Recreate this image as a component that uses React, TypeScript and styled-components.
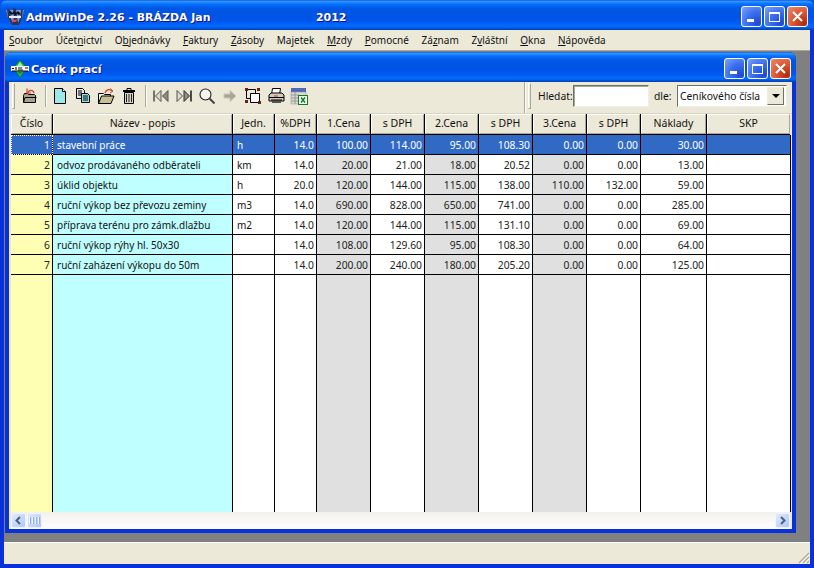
import React from 'react';
import styled, { createGlobalStyle } from 'styled-components';

const Global = createGlobalStyle`
  html, body { margin: 0; padding: 0; width: 814px; height: 568px; overflow: hidden; background: #0054e3; }
  * { box-sizing: border-box; }
  #root { width: 814px; height: 568px; }
`;

const titleGradient = `linear-gradient(180deg,#0058e6 0%,#3a93ff 4%,#288eff 7%,#127dff 10%,#036ffc 15%,#0262ee 22%,#0057e5 28%,#0054e3 56%,#0055eb 66%,#005bf5 76%,#026afe 86%,#0062ef 92%,#0052d6 95%,#0040ab 100%)`;

const Frame = styled.div`
  width: 814px; height: 568px; display: flex; flex-direction: column;
  background: #0831d9; border-radius: 7px 7px 0 0; overflow: hidden;
  font-family: "Noto Sans", "Liberation Sans", sans-serif;
`;
const TitleBar = styled.div<{ $h: number }>`
  height: ${p => p.$h}px; flex: none; display: flex; align-items: center;
  background: ${titleGradient}; color: #fff; font-weight: 700;
  font-family: "DejaVu Sans", sans-serif; text-shadow: 1px 1px 0 #0f1089;
`;
const MainTitle = styled(TitleBar)`
  padding: 2px 6px 0 6px; font-size: 10.95px;
`;
const ChildTitle = styled(TitleBar)`
  padding: 3px 5px 0 6px; font-size: 11.2px; border-radius: 7px 7px 0 0;
`;
const TitleText = styled.span<{ $w: number }>`
  width: ${p => p.$w}px; white-space: nowrap; margin-left: 2px; margin-top: 2px;
`;
const TitleYear = styled.span` margin-top: 2px; `;
const Spacer = styled.div` flex: 1; `;
const WinButtons = styled.div` display: flex; gap: 2px; `;
const WinBtn = styled.div<{ $close?: boolean }>`
  width: 21px; height: 21px; border: 1px solid #fff; border-radius: 3px; display: flex; align-items: center; justify-content: center;
  background: ${p => p.$close
    ? 'radial-gradient(circle at 85% 85%, #b02b0c 0%, #d9532f 45%, #eb8d70 100%)'
    : 'radial-gradient(circle at 85% 85%, #1e49d4 0%, #3a6ef0 50%, #7ea3f7 100%)'};
`;
const MenuBar = styled.div`
  height: 21px; flex: none; margin: 0 4px; display: flex; align-items: center; gap: 12.7px; padding: 0 0 1px 5px;
  background: #ece9d8; font-size: 10px; color: #111; border-bottom: 1px solid #aca899;
`;
const MenuItem = styled.span`
  white-space: nowrap; u { text-underline-offset: 1px; }
`;
const Mdi = styled.div`
  flex: 1; margin: 0 4px; background: #808080; padding: 1px 14px 9px 1px; display: flex; min-height: 0;
`;
const Child = styled.div`
  flex: 1; display: flex; flex-direction: column; background: #0831d9; border-radius: 7px 7px 0 0; min-width: 0;
`;
const ChildBody = styled.div`
  flex: 1; margin: 0 4px 4px 4px; background: #ece9d8; display: flex; flex-direction: column; min-height: 0;
`;
const Toolbars = styled.div`
  height: 32px; flex: none; display: flex; background: #ece9d8; border-bottom: 1px solid #d8d4c2; padding-bottom: 3px;
`;
const ToolStrip = styled.div`
  flex: 1; display: flex; align-items: center; padding: 0 0 0 3px; margin-bottom: -3px; border-right: 1px solid #aca899;
  box-shadow: 1px 0 0 #fff; padding-bottom: 3px;
`;
const Grip = styled.div`
  width: 3px; height: 26px; flex: none; border-left: 1px solid #fff; border-top: 1px solid #fff; border-right: 1px solid #aca899; border-bottom: 1px solid #aca899; margin-right: 4px;
`;
const ToolSep = styled.div<{ $r: number }>`
  width: 2px; height: 22px; flex: none; border-left: 1px solid #aca899; border-right: 1px solid #fff; margin: 0 ${p => p.$r}px 0 ${p => p.$r + 1}px;
`;
const ToolIcon = styled.svg`
  width: 18px; height: 18px; flex: none; margin: 0 3px 0 2px; display: block;
`;
const SearchPanel = styled.div`
  width: 267px; flex: none; display: flex; align-items: center; padding: 0 4px 0 3px;
  font-size: 10.3px; color: #111;
`;
const Grip2 = styled(Grip)` margin-right: 7px; `;
const SearchLabel = styled.span<{ $ml?: number; $w: number }>` margin-left: ${p => p.$ml ?? 0}px; width: ${p => p.$w}px; flex: none; white-space: nowrap; `;
const SearchInput = styled.div`
  width: 76px; height: 22px; flex: none; background: #fff; border: 1px solid; border-color: #716f64 #f1efe2 #f1efe2 #716f64; box-shadow: inset 1px 1px 0 #aca899;
`;
const Select = styled.div`
  width: 110px; height: 22px; flex: none; background: #fff; display: flex; align-items: center; padding: 1px 2px 1px 2px; border: 1px solid; border-color: #716f64 #f1efe2 #f1efe2 #716f64; font-size: 10.3px; overflow: hidden; white-space: nowrap;
`;
const SelectText = styled.span` flex: 1; overflow: hidden; min-width: 0; `;
const SelectBtn = styled.div`
  width: 17px; height: 18px; flex: none; background: #ece9d8; border: 1px solid; border-color: #f1efe2 #716f64 #716f64 #f1efe2; display: flex; align-items: center; justify-content: center;
`;
const Arrow = styled.div`
  width: 0; height: 0; border-left: 4px solid transparent; border-right: 4px solid transparent; border-top: 4px solid #000;
`;
const GridWrap = styled.div`
  flex: 1; margin-top: 0; margin-left: 2px; margin-right: 2px; display: flex; flex-direction: column; min-height: 0;
  font-size: 10.3px; color: #111; font-family: "Noto Sans", sans-serif;
`;
const cols = '42px 180px 42px 42px 54px 54px 54px 54px 54px 54px 66px 84px';
const HeadRow = styled.div`
  display: grid; grid-template-columns: ${cols}; height: 21px; flex: none; background: #000;
`;
const HeadCell = styled.div`
  background: #ece9d8; margin: 0 1px 1px 0; border-left: 1px solid #fff; border-top: 1px solid #fff; border-right: 1px solid #aca899; border-bottom: 1px solid #aca899;
  display: flex; align-items: center; justify-content: center; white-space: nowrap; padding-bottom: 3px; font-size: 10.5px;
`;
const Row = styled.div<{ $fill?: boolean }>`
  display: grid; grid-template-columns: ${cols}; height: ${p => (p.$fill ? 'auto' : '20px')}; flex: ${p => (p.$fill ? '1' : 'none')};
  min-height: 0;
`;
const Cell = styled.div<{ $bg: string; $right?: boolean; $sel?: boolean; $fill?: boolean; $focus?: boolean }>`
  background: ${p => (p.$sel ? '#316ac5' : p.$bg)}; color: ${p => (p.$sel ? '#fff' : p.$right ? '#222' : '#111')};
  border-right: 1px solid #000; border-bottom: ${p => (p.$fill ? 'none' : '1px solid #000')};
  outline: ${p => (p.$focus ? '1px dotted #fff' : 'none')}; outline-offset: -1px;
  display: flex; align-items: center; justify-content: ${p => (p.$right ? 'flex-end' : 'flex-start')};
  font-size: ${p => (p.$right ? 10.3 : 10)}px;
  padding: 0 ${p => (p.$right ? 2 : 4)}px 0 ${p => (p.$right ? 0 : 4)}px; white-space: nowrap; overflow: hidden;
`;
const HScroll = styled.div`
  height: 17px; flex: none; display: flex; justify-content: space-between; background: linear-gradient(180deg,#f3f1ec 0%,#fefefe 100%); padding: 1px 0;
`;
const ScrollLeft = styled.div` display: flex; gap: 1px; `;
const ScrollBtn = styled.div`
  width: 15px; height: 15px; border-radius: 2px; background: linear-gradient(135deg,#e1eafe,#aec8f7); border: 1px solid #eef3fd; display: flex; align-items: center; justify-content: center;
`;
const Thumb = styled(ScrollBtn)` width: 15px; gap: 1px; `;
const ThumbLine = styled.i` display: block; width: 1px; height: 7px; background: #eef4fe; box-shadow: 1px 0 0 #8cb0f8; margin-right: 1px; `;
const Status = styled.div`
  height: 22px; flex: none; margin: 0 4px 4px; background: #ece9d8; border-top: 1px solid #fff; display: flex; justify-content: flex-end; align-items: flex-end;
`;
const GripSvg = styled.svg` width: 13px; height: 13px; display: block; `;

const bgYellow = '#ffffb4', bgCyan = '#c0ffff', bgWhite = '#ffffff', bgGray = '#e0e0e0';
const colBg = [bgYellow, bgCyan, bgWhite, bgWhite, bgGray, bgWhite, bgGray, bgWhite, bgGray, bgWhite, bgWhite, bgWhite];
const rightAligned = [true, false, false, true, true, true, true, true, true, true, true, false];

const heads = ['Číslo', 'Název - popis', 'Jedn.', '%DPH', '1.Cena', 's DPH', '2.Cena', 's DPH', '3.Cena', 's DPH', 'Náklady', 'SKP'];
const rows = [
  ['1', 'stavební práce', 'h', '14.0', '100.00', '114.00', '95.00', '108.30', '0.00', '0.00', '30.00', ''],
  ['2', 'odvoz prodávaného odběrateli', 'km', '14.0', '20.00', '21.00', '18.00', '20.52', '0.00', '0.00', '13.00', ''],
  ['3', 'úklid objektu', 'h', '20.0', '120.00', '144.00', '115.00', '138.00', '110.00', '132.00', '59.00', ''],
  ['4', 'ruční výkop bez převozu zeminy', 'm3', '14.0', '690.00', '828.00', '650.00', '741.00', '0.00', '0.00', '285.00', ''],
  ['5', 'příprava terénu pro zámk.dlažbu', 'm2', '14.0', '120.00', '144.00', '115.00', '131.10', '0.00', '0.00', '69.00', ''],
  ['6', 'ruční výkop rýhy hl. 50x30', '', '14.0', '108.00', '129.60', '95.00', '108.30', '0.00', '0.00', '64.00', ''],
  ['7', 'ruční zaházení výkopu do 50m', '', '14.0', '200.00', '240.00', '180.00', '205.20', '0.00', '0.00', '125.00', ''],
];
const menu: [string, string, string][] = [
  ['', 'S', 'oubor'], ['Účet', 'n', 'ictví'], ['O', 'b', 'jednávky'], ['', 'F', 'aktury'], ['', 'Z', 'ásoby'], ['Ma', 'j', 'etek'],
  ['', 'M', 'zdy'], ['', 'P', 'omocné'], ['Zá', 'z', 'nam'], ['Z', 'v', 'láštní'], ['', 'O', 'kna'], ['', 'N', 'ápověda'],
];

const Buttons = () => (
  <WinButtons>
    <WinBtn><svg width="13" height="13"><rect x="2" y="9" width="7" height="3" fill="#fff" /></svg></WinBtn>
    <WinBtn><svg width="13" height="13"><rect x="1.5" y="2.5" width="10" height="9" fill="none" stroke="#fff" /><rect x="1" y="2" width="11" height="2" fill="#fff" /></svg></WinBtn>
    <WinBtn $close><svg width="13" height="13"><path d="M2 2l9 9M11 2l-9 9" stroke="#fff" strokeWidth="2" /></svg></WinBtn>
  </WinButtons>
);

const Logo = () => (
  <svg width="18" height="18" viewBox="0 0 18 18">
    <path d="M0 3h18l-2 8-4 6H6l-4-6z" fill="#7f9bd8" />
    <path d="M1 2l3 1 1 9 2 4 1-6-1-9 3 1 1 8 1 6 2-5 1-8 2-1-1 9-3 7H6L2 11z" fill="#2b3350" />
    <path d="M3 5l2-1 1 2 2-2 2 2 2-2 2 2 1 1-2 1-2-1-2 1-2-1-2 1z" fill="#0c0f22" />
    <path d="M3 9h12v2H3z" fill="#e8edf7" />
    <path d="M6 12l3 1 2-1-1 3-3 0z" fill="#d8476a" />
  </svg>
);
const ChildLogo = () => (
  <svg width="18" height="20" viewBox="0 0 18 20">
    <path d="M9 1l6.5 7.5L9 19 2.5 8.5z" fill="#27b34a" stroke="#0b5c20" strokeWidth=".6" />
    <path d="M9 3l3 4H6z" fill="#9ef0a8" />
    <rect x="0" y="7" width="18" height="5" fill="#f8f8f8" />
    <path d="M1 12h16" stroke="#111" />
    <path d="M1 9.5h2M5 8v3M7 9h4M7 11h5M14 9h3" stroke="#111" strokeWidth="1.1" />
    <path d="M9 15l3-3H6z" fill="#0f7f30" />
  </svg>
);

const Icons = {
  back: (
    <ToolIcon viewBox="0 0 18 18">
      <path d="M2.5 8.5l1-2h3l1 1h6l1 1v7h-12z" fill="#a9a28b" stroke="#000" />
      <path d="M2.5 15.5l1.5-5h11.5" fill="none" stroke="#000" />
      <path d="M7 6c1-3.5 5-3.5 6 0" fill="none" stroke="#d8402a" strokeWidth="1.4" />
      <path d="M6 1.5V6h4" fill="none" stroke="#d8402a" strokeWidth="1.2" />
    </ToolIcon>
  ),
  file: (
    <ToolIcon viewBox="0 0 18 18">
      <path d="M3.5 1.5h8l3 3v12h-11z" fill="#9fe8e8" stroke="#000" />
      <path d="M11.5 1.5v3h3" fill="#fff" stroke="#000" />
    </ToolIcon>
  ),
  copy: (
    <ToolIcon viewBox="0 0 18 18">
      <path d="M2.5 1.5h6l2 2v8h-8z" fill="#e8e8e8" stroke="#000" />
      <path d="M4 4h4M4 6h4M4 8h4" stroke="#000" />
      <path d="M7.5 6.5h6l2 2v7h-8z" fill="#8fe0e8" stroke="#000" />
      <path d="M9 9h5M9 11h5M9 13h5" stroke="#000" />
    </ToolIcon>
  ),
  open: (
    <ToolIcon viewBox="0 0 18 18">
      <path d="M1.5 6.5h5l1 1h6v2H5l-3.5 7z" fill="#f4f2e4" stroke="#000" />
      <path d="M1.5 16.5l3-7.5h12.5l-3 7.5z" fill="#c8bf94" stroke="#000" />
      <path d="M8 6c1-4 5-4 7-2" fill="none" stroke="#d8402a" strokeWidth="1.3" />
      <path d="M13 1.5l3 2.5-3 2" fill="none" stroke="#d8402a" />
    </ToolIcon>
  ),
  trash: (
    <ToolIcon viewBox="0 0 18 18">
      <path d="M3 4h12" stroke="#000" strokeWidth="2" />
      <path d="M7 3V1.5h4V3" fill="none" stroke="#000" />
      <path d="M4.5 5.5h9v11h-9z" fill="#d8d4c2" stroke="#000" />
      <path d="M6.5 7v8M9 7v8M11.5 7v8" stroke="#222" />
    </ToolIcon>
  ),
  first: (
    <ToolIcon viewBox="0 0 18 18">
      <path d="M2 3.5v11" stroke="#555" strokeWidth="1.6" />
      <path d="M9 3.5L3.5 9 9 14.5z" fill="#ddd9c6" stroke="#555" />
      <path d="M16 3.5L10.5 9l5.5 5.5z" fill="#8f8c7c" stroke="#555" />
    </ToolIcon>
  ),
  last: (
    <ToolIcon viewBox="0 0 18 18">
      <path d="M2 3.5L7.5 9 2 14.5z" fill="#ddd9c6" stroke="#555" />
      <path d="M9 3.5L14.5 9 9 14.5z" fill="#8f8c7c" stroke="#333" />
      <path d="M16 3.5v11" stroke="#222" strokeWidth="1.6" />
    </ToolIcon>
  ),
  find: (
    <ToolIcon viewBox="0 0 18 18">
      <circle cx="7.5" cy="7.5" r="5.5" fill="#f6f5ee" stroke="#222" strokeWidth="1.1" />
      <path d="M11.5 11.5l5 5" stroke="#444" strokeWidth="2" />
    </ToolIcon>
  ),
  next: (
    <ToolIcon viewBox="0 0 18 18">
      <path d="M3 7h6V3.5L15 9l-6 5.5V11H3z" fill="#a8a597" stroke="#c8c5b6" />
    </ToolIcon>
  ),
  nodes: (
    <ToolIcon viewBox="0 0 18 18">
      <path d="M2.5 2.5h9v9h-9z" fill="none" stroke="#000" />
      <path d="M6.5 6.5h9v9h-9z" fill="#fff" stroke="#000" />
      <path d="M1 1h3v3H1zM13 1h3v3h-3zM1 13h3v3H1zM14 14h3v3h-3z" fill="#6e1e12" />
    </ToolIcon>
  ),
  print: (
    <ToolIcon viewBox="0 0 18 18">
      <path d="M5.5 1.5h8l-1 6h-8z" fill="#fff" stroke="#000" />
      <path d="M2 8l2-2h11l2 2v6H2z" fill="#cfccbd" stroke="#000" />
      <path d="M2 10.5h15M4 13h11" stroke="#000" />
      <path d="M5 15h9" stroke="#555" strokeWidth="2" />
      <path d="M7 9h4" stroke="#c33" />
    </ToolIcon>
  ),
  excel: (
    <ToolIcon viewBox="0 0 18 18">
      <rect x="1" y="1" width="15" height="4" fill="#5068b8" />
      <rect x="1" y="5" width="15" height="12" fill="#d9d9d6" stroke="#8a8a8a" strokeWidth=".5" />
      <path d="M1 8h8M1 11h8M1 14h8M5 5v12" stroke="#999" />
      <rect x="8.5" y="8.5" width="9" height="9" fill="#eef8e8" stroke="#157a2c" />
      <path d="M11 10.5l4 5M15 10.5l-4 5" stroke="#157a2c" strokeWidth="1.4" />
    </ToolIcon>
  ),
};

export default function App() {
  return (
    <Frame>
      <Global />
      <MainTitle $h={30}>
        <Logo />
        <TitleText $w={290}>AdmWinDe 2.26 - BRÁZDA Jan</TitleText>
        <TitleYear>2012</TitleYear>
        <Spacer />
        <Buttons />
      </MainTitle>
      <MenuBar>
        {menu.map(([a, u, b]) => (
          <MenuItem key={a + u + b}>{a}<u>{u}</u>{b}</MenuItem>
        ))}
      </MenuBar>
      <Mdi>
        <Child>
          <ChildTitle $h={30}>
            <ChildLogo />
            <TitleText $w={200}>Ceník prací</TitleText>
            <Spacer />
            <Buttons />
          </ChildTitle>
          <ChildBody>
            <Toolbars>
              <ToolStrip>
                <Grip />
                {Icons.back}
                <ToolSep $r={2} />
                {Icons.file}{Icons.copy}{Icons.open}{Icons.trash}
                <ToolSep $r={3} />
                {Icons.first}{Icons.last}{Icons.find}{Icons.next}{Icons.nodes}{Icons.print}{Icons.excel}
              </ToolStrip>
              <SearchPanel>
                <Grip2 />
                <SearchLabel $w={35}>Hledat:</SearchLabel>
                <SearchInput />
                <SearchLabel $ml={5} $w={23}>dle:</SearchLabel>
                <Select>
                  <SelectText>Ceníkového čísla</SelectText>
                  <SelectBtn><Arrow /></SelectBtn>
                </Select>
              </SearchPanel>
            </Toolbars>
            <GridWrap>
              <HeadRow>
                {heads.map((h, i) => <HeadCell key={i}>{h}</HeadCell>)}
              </HeadRow>
              {rows.map((r, ri) => (
                <Row key={ri}>
                  {r.map((c, i) => (
                    <Cell key={i} $bg={colBg[i]} $right={rightAligned[i]} $sel={ri === 0} $focus={ri === 0 && i === 0}>{c}</Cell>
                  ))}
                </Row>
              ))}
              <Row $fill>
                {colBg.map((b, i) => <Cell key={i} $bg={b} $fill />)}
              </Row>
              <HScroll>
                <ScrollLeft>
                  <ScrollBtn><svg width="9" height="9"><path d="M6 1L2.5 4.5 6 8" fill="none" stroke="#4d6185" strokeWidth="2" /></svg></ScrollBtn>
                  <Thumb><ThumbLine /><ThumbLine /><ThumbLine /><ThumbLine /></Thumb>
                </ScrollLeft>
                <ScrollBtn><svg width="9" height="9"><path d="M3 1l3.5 3.5L3 8" fill="none" stroke="#4d6185" strokeWidth="2" /></svg></ScrollBtn>
              </HScroll>
            </GridWrap>
          </ChildBody>
        </Child>
      </Mdi>
      <Status>
        <GripSvg viewBox="0 0 13 13">
          <path d="M12 2L2 12M12 6L6 12M12 10l-2 2" stroke="#aca899" strokeWidth="1.2" />
          <path d="M13 3L3 13M13 7L7 13M13 11l-2 2" stroke="#fff" strokeWidth=".8" />
        </GripSvg>
      </Status>
    </Frame>
  );
}
